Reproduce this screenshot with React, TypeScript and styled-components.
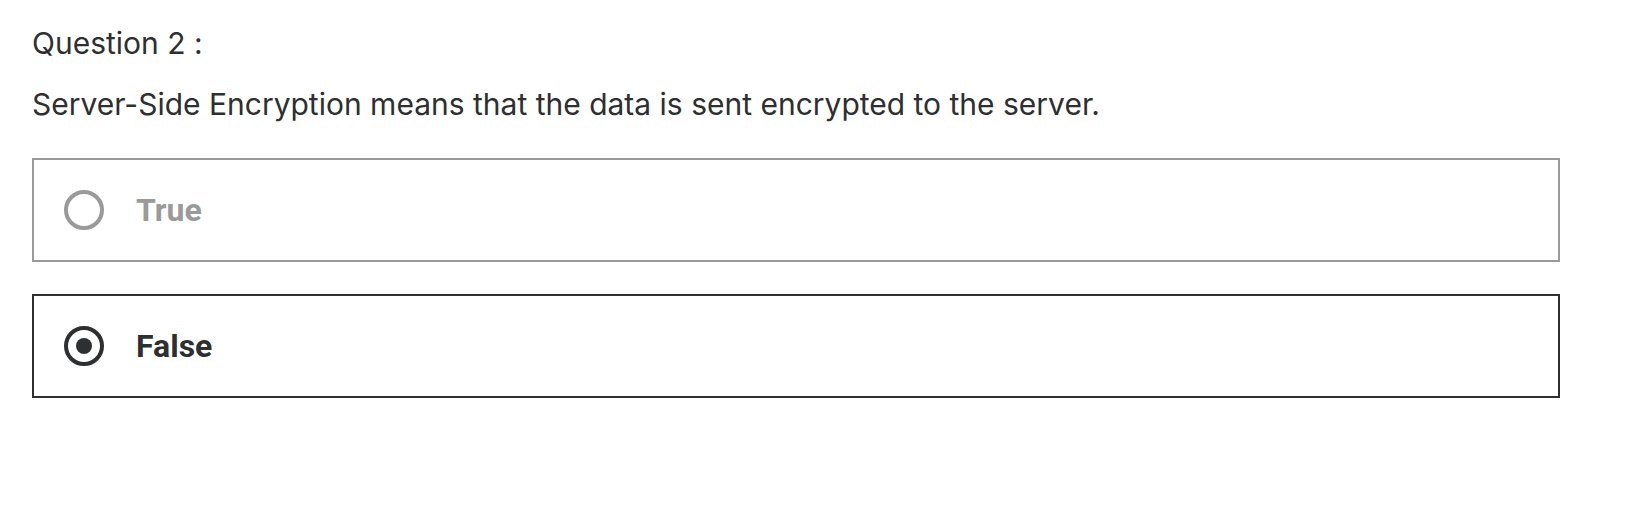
import React from "react";
import styled, { createGlobalStyle } from "styled-components";

const Global = createGlobalStyle`
  html, body { margin: 0; padding: 0; background: #ffffff; }
  body { font-family: Inter, Roboto, "Liberation Sans", Arial, sans-serif; color: #2d2f31; }
`;

const Page = styled.div`
  padding: 23px 78px 0 32px;
`;

const Heading = styled.div`
  font-size: 30px;
  line-height: 40px;
  color: #2d2f31;
  font-feature-settings: "calt" 0;
`;

const Prompt = styled.div`
  margin-top: 21px;
  font-size: 30px;
  line-height: 40px;
  color: #2d2f31;
`;

const Options = styled.div`
  margin-top: 34px;
  display: flex;
  flex-direction: column;
  gap: 32px;
`;

const Option = styled.label<{ $selected: boolean }>`
  box-sizing: border-box;
  height: 104px;
  display: flex;
  align-items: center;
  gap: 32px;
  padding: 0 30px;
  border: 2px solid ${(p) => (p.$selected ? "#2d2f31" : "#9a9a9a")};
  background: #fff;
  cursor: pointer;
`;

const Radio = styled.span<{ $selected: boolean }>`
  box-sizing: border-box;
  width: 40px;
  height: 40px;
  flex: 0 0 40px;
  border-radius: 50%;
  border: 4px solid ${(p) => (p.$selected ? "#2d2f31" : "#9a9a9a")};
  display: flex;
  align-items: center;
  justify-content: center;
  &::after {
    content: "";
    display: ${(p) => (p.$selected ? "block" : "none")};
    width: 16px;
    height: 16px;
    border-radius: 50%;
    background: #2d2f31;
  }
`;

const OptionText = styled.span<{ $selected: boolean }>`
  font-family: Roboto, "Liberation Sans", Arial, sans-serif;
  font-size: 32px;
  font-weight: 700;
  color: ${(p) => (p.$selected ? "#2d2f31" : "#9a9a9a")};
`;

const answers = [
  { label: "True", selected: false },
  { label: "False", selected: true },
];

export default function App() {
  return (
    <>
      <Global />
      <Page>
        <Heading>Question 2 :</Heading>
        <Prompt>Server-Side Encryption means that the data is sent encrypted to the server.</Prompt>
        <Options>
          {answers.map((a) => (
            <Option key={a.label} $selected={a.selected}>
              <Radio $selected={a.selected} />
              <OptionText $selected={a.selected}>{a.label}</OptionText>
            </Option>
          ))}
        </Options>
      </Page>
    </>
  );
}
